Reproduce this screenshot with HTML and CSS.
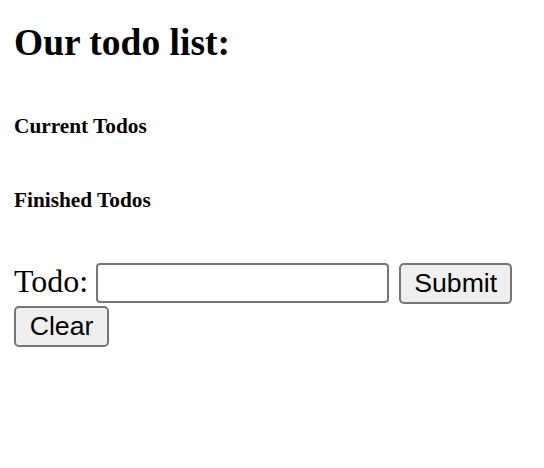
FILE: index.html
```html
<!DOCTYPE html>
<html lang="en">
<head>
<meta charset="utf-8">
<title>Todo list</title>
<link rel="stylesheet" href="styles.css">
</head>
<body>
<main class="page">
  <h1 class="title">Our todo list:</h1>
  <section class="group group-current">
    <h4 class="group-title">Current Todos</h4>
    <ul class="todo-items"></ul>
  </section>
  <section class="group group-finished">
    <h4 class="group-title">Finished Todos</h4>
    <ul class="todo-items"></ul>
  </section>
  <form class="todo-form">
    <div class="form-row">
      <label class="todo-label" for="todo">Todo:</label>
      <input class="todo-input" id="todo" type="text">
      <button class="btn btn-submit" type="submit">Submit</button>
    </div>
    <div class="form-row">
      <button class="btn btn-clear" type="button">Clear</button>
    </div>
  </form>
</main>
</body>
</html>
```

FILE: styles.css
```css
html, body {
  margin: 0;
  padding: 0;
  background: #ffffff;
}

body {
  font-family: "Liberation Serif", "Times New Roman", serif;
  color: #000000;
}

.page {
  padding: 22px 14px 0 14px;
}

.title {
  margin: 0;
  font-size: 37.5px;
  line-height: 42px;
  font-weight: bold;
}

.group {
  margin: 0;
}

.group-current {
  margin-top: 50px;
}

.group-finished {
  margin-top: 50px;
}

.group-title {
  margin: 0;
  font-size: 21.3px;
  line-height: 24px;
  font-weight: bold;
}

.todo-items {
  margin: 0;
  padding: 0;
  list-style: none;
}

.todo-form {
  margin-top: 51px;
  display: flex;
  flex-direction: column;
  gap: 2px;
}

.form-row {
  display: flex;
  align-items: flex-start;
}

.todo-label {
  font-size: 32px;
  line-height: 36px;
  margin-right: 8px;
}

.todo-input {
  box-sizing: border-box;
  width: 293px;
  height: 40px;
  margin: 0 10px 0 0;
  padding: 2px 4px;
  border: 2px solid #767676;
  border-radius: 4px;
  background: #ffffff;
  font-family: "Liberation Sans", Arial, sans-serif;
  font-size: 26px;
}

.btn {
  box-sizing: border-box;
  height: 41px;
  margin: 0;
  padding: 0 12px;
  border: 2px solid #767676;
  border-radius: 5px;
  background: #efefef;
  color: #000000;
  font-family: "Liberation Sans", Arial, sans-serif;
  font-size: 26.67px;
  line-height: 37px;
}

.btn-submit {
  width: 113px;
}

.btn-clear {
  width: 95px;
}
```
